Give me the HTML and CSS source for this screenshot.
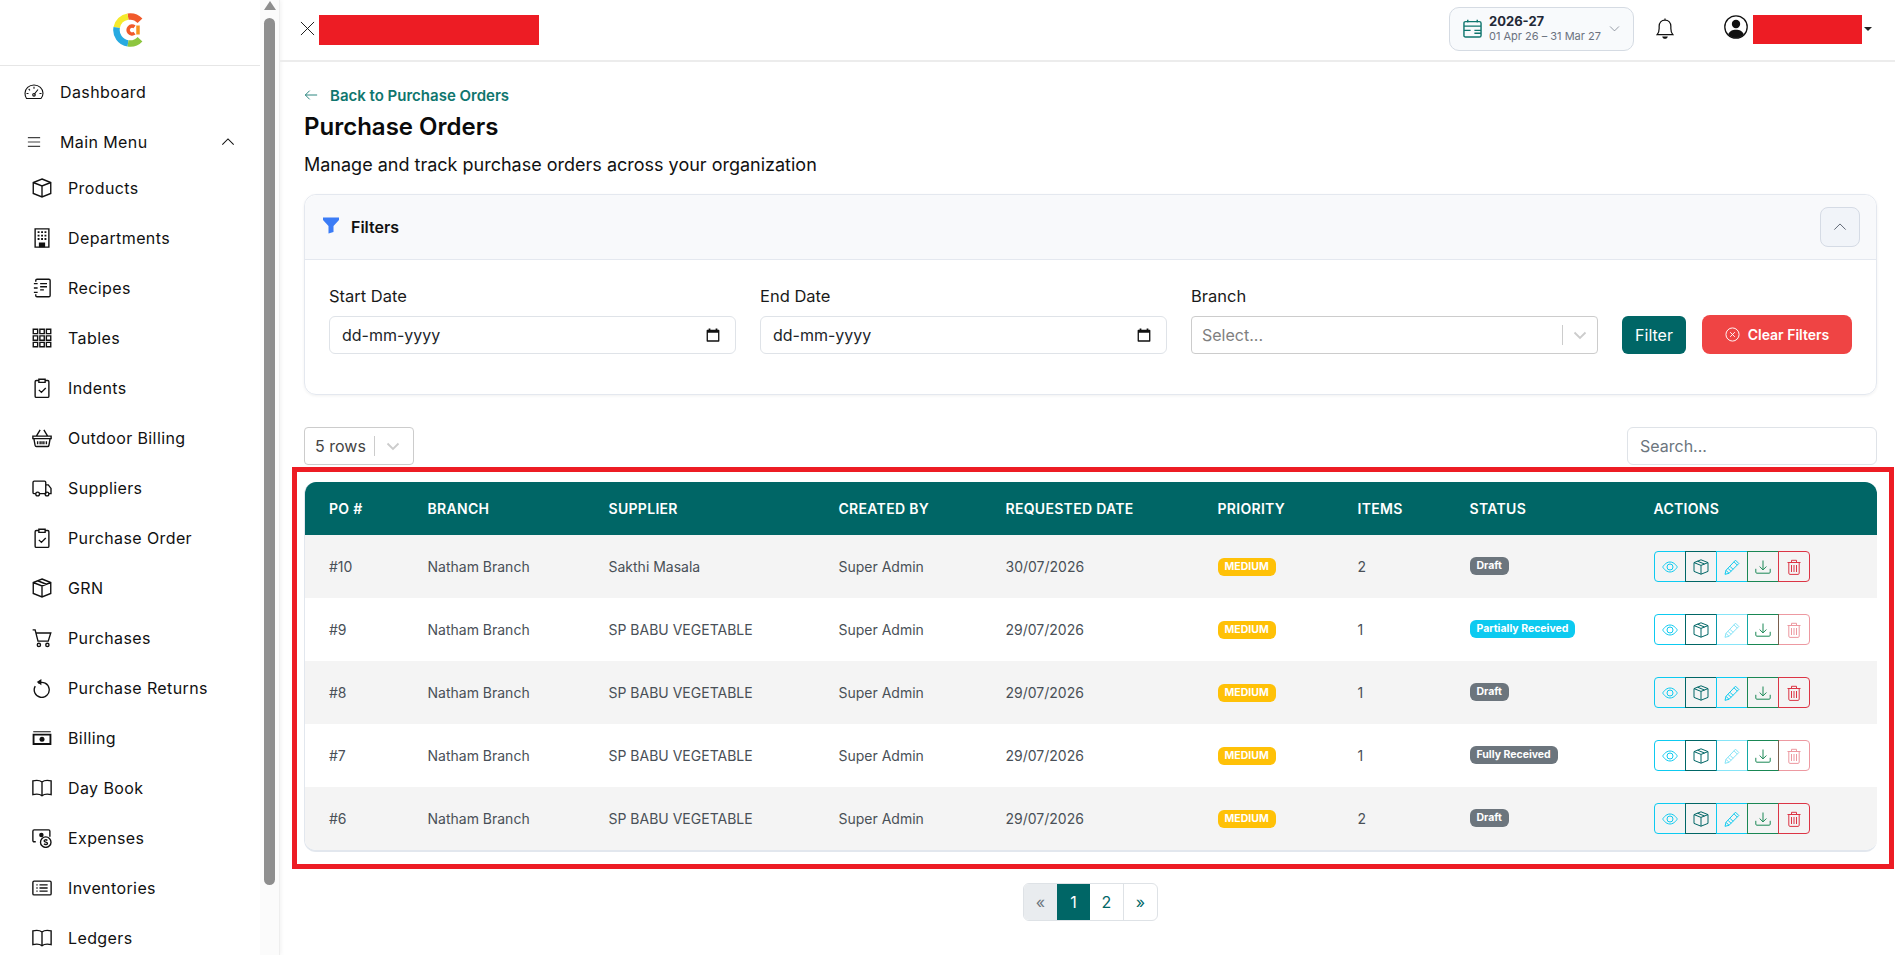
FILE: index.html
```html
<!DOCTYPE html>
<html lang="en">
<head>
    <meta charset="UTF-8">
    <meta name="viewport" content="width=device-width, initial-scale=1.0">
    <title>Purchase Orders</title>
    <link rel="stylesheet" href="styles.css">
</head>
<body>
    <svg class="icon-defs" aria-hidden="true">
        <symbol id="i-box" viewBox="0 0 16 16"><path d="M8 .8l7 2.8v8.800l-7 2.800-7-2.800V3.600zM1 3.600l7 2.800 7-2.800M8 6.400v8.800"/></symbol>
        <symbol id="i-seam" viewBox="0 0 16 16"><path d="M8 .8l7 2.800v8.800l-7 2.800-7-2.800V3.600zM1 3.600l7 2.800 7-2.800M8 6.400v8.800M4.500 2.200l7 2.800"/></symbol>
        <symbol id="i-eye" viewBox="0 0 16 16"><path d="M.7 8S3.400 3 8 3s7.300 5 7.300 5-2.700 5-7.300 5S.7 8 .7 8z"/><circle cx="8" cy="8" r="3"/></symbol>
        <symbol id="i-pencil" viewBox="0 0 16 16"><path d="M11.500 1.200l3.300 3.300L5 14.300l-4 1 1-4zM10 2.800l3.300 3.300M2 11.300l3 3M4 9.300l3 3M6 7.300l3 3"/></symbol>
        <symbol id="i-download" viewBox="0 0 16 16"><path d="M.8 9.800v3.400c0 .6.400 1 1 1h12.400c.6 0 1-.4 1-1V9.800M8 1.500v9.300M4.600 7.500L8 10.900l3.400-3.400"/></symbol>
        <symbol id="i-trash" viewBox="0 0 16 16"><path d="M1.500 3.500h13M5.500 3.500V1.300h5v2.200M2.800 3.500v10.700c0 .7.500 1.200 1.200 1.200h8c.7 0 1.200-.5 1.200-1.200V3.500M5.500 6v7M8 6v7M10.500 6v7"/></symbol>
        <symbol id="i-book" viewBox="0 0 16 16"><path d="M8 3.200C6.500 2 3.500 1.700.7 2.300v11c2.800-.6 5.800-.3 7.300.9 1.500-1.200 4.500-1.500 7.300-.9v-11C12.500 1.700 9.500 2 8 3.200zM8 3.200v11"/></symbol>
        <symbol id="i-clip" viewBox="0 0 16 16"><path d="M5.500 2H3.500c-.6 0-1 .4-1 1v11.500c0 .6.400 1 1 1h9c.6 0 1-.4 1-1V3c0-.6-.4-1-1-1h-2M5.500 1h5v2.500h-5zM5.500 9.500l2 2 3.500-3.500"/></symbol>
        <symbol id="i-chev-up" viewBox="0 0 16 16"><path d="M1.500 11L8 4.500l6.500 6.500"/></symbol>
        <symbol id="i-chev-down" viewBox="0 0 16 16"><path d="M1.500 5L8 11.500 14.500 5"/></symbol>
    </svg>

    <aside class="sidebar">
        <div class="sidebar-nav">
            <div class="logo-row">
                <svg class="logo" viewBox="0 0 34 34">
                    <path d="M15 3.600A13.500 13.500 0 0 1 27 7.800" stroke="#f15a2b"/>
                    <path d="M3.700 14.500A13.500 13.500 0 0 1 15 3.600" stroke="#f5ea2d"/>
                    <path d="M15 30.400A13.500 13.500 0 0 1 3.700 14.500" stroke="#27aae1"/>
                    <path d="M27 26.200A13.500 13.500 0 0 1 15 30.400" stroke="#8dc63f"/>
                    <path class="logo-inner" d="M21.500 13.800a4 4 0 1 0 0 6.400" stroke="#f15a2b"/>
                    <path class="logo-inner" d="M25 12.500v9" stroke="#f7941d"/>
                </svg>
            </div>
            <a class="nav-top">
                <svg class="nav-icon" viewBox="0 0 20 16"><path d="M2.500 14.500H17c1.200-1.500 2-3.200 2-5.200C19 4.600 15 1 10 1S1 4.600 1 9.300c0 2 .4 3.700 1.500 5.200zM10 10.500l4-5M2.500 9.500h2M15.500 9.500h2M4.700 5l1.300 1.300M10 2.800v2"/><circle cx="10" cy="10.800" r="1.300"/></svg>
                <span>Dashboard</span>
            </a>
            <a class="nav-top nav-menu">
                <svg class="nav-icon nav-icon-lines" viewBox="0 0 16 16"><path d="M1 3h14M1 8h14M1 13h14"/></svg>
                <span>Main Menu</span>
                <svg class="nav-caret"><use href="#i-chev-up"/></svg>
            </a>
            <a class="nav-item"><svg class="nav-icon"><use href="#i-box"/></svg><span>Products</span></a>
            <a class="nav-item">
                <svg class="nav-icon" viewBox="0 0 16 16"><path d="M2.500 .7h11v14.600h-11z"/><path class="solid" d="M4.500 2.500h1.500v1.500H4.500zM7.300 2.500h1.500v1.500H7.300zM10 2.500h1.500v1.500H10zM4.500 5.300h1.500v1.500H4.500zM7.300 5.300h1.500v1.500H7.300zM10 5.300h1.500v1.500H10zM4.500 8h1.500v1.500H4.500zM7.300 8h1.500v1.500H7.300zM10 8h1.500v1.500H10zM5.500 11.500h5v3.800h-5z"/></svg>
                <span>Departments</span>
            </a>
            <a class="nav-item">
                <svg class="nav-icon" viewBox="0 0 16 16"><path d="M3 3V2c0-.6.400-1 1-1h9.500c.6 0 1 .4 1 1v12c0 .6-.4 1-1 1H4c-.6 0-1-.4-1-1v-1M1.500 4.500h3M1.500 8h3M1.500 11.500h3M6.500 4.500h5.500M6.500 7h5.500M6.500 9.500h3"/></svg>
                <span>Recipes</span>
            </a>
            <a class="nav-item">
                <svg class="nav-icon" viewBox="0 0 16 16"><path d="M1 1h3.500v3.500H1zM6.300 1h3.500v3.500H6.300zM11.500 1H15v3.500h-3.500zM1 6.300h3.500v3.500H1zM6.300 6.300h3.500v3.500H6.300zM11.500 6.300H15v3.500h-3.500zM1 11.500h3.500V15H1zM6.300 11.500h3.500V15H6.300zM11.500 11.500H15V15h-3.500z"/></svg>
                <span>Tables</span>
            </a>
            <a class="nav-item"><svg class="nav-icon"><use href="#i-clip"/></svg><span>Indents</span></a>
            <a class="nav-item">
                <svg class="nav-icon" viewBox="0 0 16 16"><path d="M.7 6.500h14.600v2H.7zM1.500 8.500l1 5.500c.1.500.5.800 1 .8h9c.5 0 .9-.3 1-.8l1-5.500M3.500 6.500L6.500 1.500M12.500 6.500L9.500 1.500M4.500 10.500v2.500M6.500 10.500v2.500M8 10.500v2.500M9.500 10.500v2.500M11.500 10.500v2.500"/></svg>
                <span>Outdoor Billing</span>
            </a>
            <a class="nav-item">
                <svg class="nav-icon" viewBox="0 0 16 16"><path d="M3 12.500H1.800c-.6 0-1-.4-1-1V3.500c0-.6.400-1 1-1h8.200c.6 0 1 .4 1 1v9H6M11 5.500h2l2.200 2.800v4.200H13.500"/><circle cx="4.500" cy="12.800" r="1.500"/><circle cx="12" cy="12.800" r="1.500"/></svg>
                <span>Suppliers</span>
            </a>
            <a class="nav-item"><svg class="nav-icon"><use href="#i-clip"/></svg><span>Purchase Order</span></a>
            <a class="nav-item"><svg class="nav-icon"><use href="#i-seam"/></svg><span>GRN</span></a>
            <a class="nav-item">
                <svg class="nav-icon" viewBox="0 0 16 16"><path d="M.5 1.500h2l2.300 9h8.200l2-6.500H3.500"/><circle cx="5.500" cy="13.500" r="1.300"/><circle cx="12.300" cy="13.500" r="1.300"/></svg>
                <span>Purchases</span>
            </a>
            <a class="nav-item">
                <svg class="nav-icon" viewBox="0 0 16 16"><path d="M5 4.200A6 6 0 1 1 2.600 6.500"/><path class="solid" d="M7.500 .7v5L3.800 3.200z"/></svg>
                <span>Purchase Returns</span>
            </a>
            <a class="nav-item">
                <svg class="nav-icon" viewBox="0 0 16 16"><path class="solid" fill-rule="evenodd" d="M.5 4.500h15v9H.5zM2 6v6h12V6zM1 2.500h14v.8H1z"/><ellipse class="solid" cx="8" cy="9" rx="2" ry="2"/></svg>
                <span>Billing</span>
            </a>
            <a class="nav-item"><svg class="nav-icon"><use href="#i-book"/></svg><span>Day Book</span></a>
            <a class="nav-item">
                <svg class="nav-icon" viewBox="0 0 16 16"><path d="M3 11H1.700C1.100 11 .7 10.600 .7 10V2.500c0-.6.400-1 1-1h11.600c.6 0 1 .4 1 1V7"/><circle class="solid" cx="7.500" cy="5.500" r="1.800"/><circle cx="11" cy="11.300" r="4.200"/><path d="M12.300 10c-.8-.9-2.600-.7-2.600.4 0 1.200 2.700.7 2.700 1.900 0 1.100-2 1.200-2.800.3"/></svg>
                <span>Expenses</span>
            </a>
            <a class="nav-item">
                <svg class="nav-icon" viewBox="0 0 16 16"><path d="M1.700 2.500h12.600c.6 0 1 .4 1 1v9c0 .6-.4 1-1 1H1.700c-.6 0-1-.4-1-1v-9c0-.6.400-1 1-1zM3.500 5.500h1M3.500 8h1M3.500 10.500h1M6 5.500h6.500M6 8h6.500M6 10.500h6.500"/></svg>
                <span>Inventories</span>
            </a>
            <a class="nav-item"><svg class="nav-icon"><use href="#i-book"/></svg><span>Ledgers</span></a>
        </div>
        <div class="sidebar-scroll">
            <span class="scroll-arrow"></span>
            <span class="scroll-thumb"></span>
        </div>
    </aside>

    <div class="main">
        <header class="topbar">
            <svg class="close-icon" viewBox="0 0 16 16"><path d="M1 1l14 14M15 1L1 15"/></svg>
            <span class="redacted redacted-org"></span>
            <div class="topbar-right">
                <div class="fy-picker">
                    <svg class="fy-icon" viewBox="0 0 20 20"><path d="M1 4.500c0-1 .6-1.700 1.700-1.700h14.600c1.100 0 1.700.7 1.700 1.700v12.800c0 1-.6 1.700-1.700 1.700H2.700c-1.100 0-1.700-.7-1.700-1.700zM1 7.500h18M5 .8v3M15 .8v3M1 12h7M12 12h7M12 15h7"/></svg>
                    <div class="fy-text">
                        <strong>2026-27</strong>
                        <small>01 Apr 26 – 31 Mar 27</small>
                    </div>
                    <svg class="fy-caret"><use href="#i-chev-down"/></svg>
                </div>
                <svg class="bell" viewBox="0 0 16 20"><path d="M1 15.500c1.300-1.300 1.800-3 1.800-5.500V8c0-3 2-5.500 5.200-5.500S13.200 5 13.200 8v2c0 2.500.5 4.200 1.800 5.500zM8 2.500V1"/><path class="solid" d="M5.500 17h5c-.3 1.300-1.300 2.200-2.500 2.200S5.800 18.300 5.500 17z"/></svg>
                <svg class="user-icon" viewBox="0 0 24 24"><circle cx="12" cy="12" r="11.200"/><circle class="solid" cx="12" cy="9" r="4.200"/><path class="solid" d="M4.200 19.500C5.500 16 8.500 14.700 12 14.700s6.500 1.300 7.800 4.800A11 11 0 0 1 12 23a11 11 0 0 1-7.800-3.500z"/></svg>
                <span class="redacted redacted-user"></span>
                <span class="user-caret"></span>
            </div>
        </header>

        <main class="content">
            <a class="back-link">
                <svg viewBox="0 0 16 16"><path d="M15 8H1.500M6.500 3l-5 5 5 5"/></svg>
                <span>Back to Purchase Orders</span>
            </a>
            <h1>Purchase Orders</h1>
            <p class="subtitle">Manage and track purchase orders across your organization</p>

            <section class="filter-card">
                <div class="filter-head">
                    <svg class="funnel" viewBox="0 0 16 16"><path d="M0 0h16v2.500L10.500 8.500V14.500L5.500 16V8.500L0 2.500z"/></svg>
                    <span class="filter-title">Filters</span>
                    <button class="collapse-btn"><svg><use href="#i-chev-up"/></svg></button>
                </div>
                <div class="filter-body">
                    <div class="field">
                        <label>Start Date</label>
                        <div class="date-input">
                            <span>dd-mm-yyyy</span>
                            <svg viewBox="0 0 16 16"><path class="solid" fill-rule="evenodd" d="M3 .5h2v1.500h6V.5h2v1.500h1.500c.5 0 .8.300.8.800v12c0 .5-.3.800-.8.800h-13c-.5 0-.8-.3-.8-.8v-12c0-.5.300-.8.800-.8H3zM2.200 5.500v8.500h11.600V5.500z"/></svg>
                        </div>
                    </div>
                    <div class="field">
                        <label>End Date</label>
                        <div class="date-input">
                            <span>dd-mm-yyyy</span>
                            <svg viewBox="0 0 16 16"><path class="solid" fill-rule="evenodd" d="M3 .5h2v1.500h6V.5h2v1.500h1.500c.5 0 .8.300.8.800v12c0 .5-.3.800-.8.800h-13c-.5 0-.8-.3-.8-.8v-12c0-.5.300-.8.800-.8H3zM2.200 5.500v8.500h11.600V5.500z"/></svg>
                        </div>
                    </div>
                    <div class="field">
                        <label>Branch</label>
                        <div class="select-box">
                            <span class="select-value">Select...</span>
                            <span class="select-sep"></span>
                            <svg class="select-caret" viewBox="0 0 20 20"><path d="M4.500 7.500L10 13l5.500-5.500"/></svg>
                        </div>
                    </div>
                    <div class="filter-actions">
                        <button class="btn-filter">Filter</button>
                        <button class="btn-clear">
                            <svg viewBox="0 0 16 16"><circle cx="8" cy="8" r="7"/><path d="M5.500 5.500l5 5M10.500 5.500l-5 5"/></svg>
                            Clear Filters
                        </button>
                    </div>
                </div>
            </section>

            <div class="toolbar">
                <div class="rows-select">
                    <span class="select-value">5 rows</span>
                    <span class="select-sep"></span>
                    <svg class="select-caret" viewBox="0 0 20 20"><path d="M4.500 7.500L10 13l5.500-5.500"/></svg>
                </div>
                <div class="search-box">Search...</div>
            </div>

            <div class="table-wrap">
                <table class="orders">
                    <thead>
                        <tr>
                            <th>PO #</th><th>Branch</th><th>Supplier</th><th>Created By</th><th>Requested Date</th><th>Priority</th><th>Items</th><th>Status</th><th>Actions</th>
                        </tr>
                    </thead>
                    <tbody>
                        <tr>
                            <td>#10</td><td>Natham Branch</td><td>Sakthi Masala</td><td>Super Admin</td><td>30/07/2026</td>
                            <td><span class="badge badge-medium">MEDIUM</span></td><td>2</td>
                            <td><span class="badge badge-status badge-gray">Draft</span></td>
                            <td>
                                <div class="actions">
                                    <button class="act act-info"><svg><use href="#i-eye"/></svg></button>
                                    <button class="act act-teal"><svg><use href="#i-seam"/></svg></button>
                                    <button class="act act-info"><svg><use href="#i-pencil"/></svg></button>
                                    <button class="act act-green"><svg><use href="#i-download"/></svg></button>
                                    <button class="act act-red"><svg><use href="#i-trash"/></svg></button>
                                </div>
                            </td>
                        </tr>
                        <tr>
                            <td>#9</td><td>Natham Branch</td><td>SP BABU VEGETABLE</td><td>Super Admin</td><td>29/07/2026</td>
                            <td><span class="badge badge-medium">MEDIUM</span></td><td>1</td>
                            <td><span class="badge badge-status badge-cyan">Partially Received</span></td>
                            <td>
                                <div class="actions">
                                    <button class="act act-info"><svg><use href="#i-eye"/></svg></button>
                                    <button class="act act-teal"><svg><use href="#i-seam"/></svg></button>
                                    <button class="act act-info is-disabled"><svg><use href="#i-pencil"/></svg></button>
                                    <button class="act act-green"><svg><use href="#i-download"/></svg></button>
                                    <button class="act act-red is-disabled"><svg><use href="#i-trash"/></svg></button>
                                </div>
                            </td>
                        </tr>
                        <tr>
                            <td>#8</td><td>Natham Branch</td><td>SP BABU VEGETABLE</td><td>Super Admin</td><td>29/07/2026</td>
                            <td><span class="badge badge-medium">MEDIUM</span></td><td>1</td>
                            <td><span class="badge badge-status badge-gray">Draft</span></td>
                            <td>
                                <div class="actions">
                                    <button class="act act-info"><svg><use href="#i-eye"/></svg></button>
                                    <button class="act act-teal"><svg><use href="#i-seam"/></svg></button>
                                    <button class="act act-info"><svg><use href="#i-pencil"/></svg></button>
                                    <button class="act act-green"><svg><use href="#i-download"/></svg></button>
                                    <button class="act act-red"><svg><use href="#i-trash"/></svg></button>
                                </div>
                            </td>
                        </tr>
                        <tr>
                            <td>#7</td><td>Natham Branch</td><td>SP BABU VEGETABLE</td><td>Super Admin</td><td>29/07/2026</td>
                            <td><span class="badge badge-medium">MEDIUM</span></td><td>1</td>
                            <td><span class="badge badge-status badge-gray">Fully Received</span></td>
                            <td>
                                <div class="actions">
                                    <button class="act act-info"><svg><use href="#i-eye"/></svg></button>
                                    <button class="act act-teal"><svg><use href="#i-seam"/></svg></button>
                                    <button class="act act-info is-disabled"><svg><use href="#i-pencil"/></svg></button>
                                    <button class="act act-green"><svg><use href="#i-download"/></svg></button>
                                    <button class="act act-red is-disabled"><svg><use href="#i-trash"/></svg></button>
                                </div>
                            </td>
                        </tr>
                        <tr>
                            <td>#6</td><td>Natham Branch</td><td>SP BABU VEGETABLE</td><td>Super Admin</td><td>29/07/2026</td>
                            <td><span class="badge badge-medium">MEDIUM</span></td><td>2</td>
                            <td><span class="badge badge-status badge-gray">Draft</span></td>
                            <td>
                                <div class="actions">
                                    <button class="act act-info"><svg><use href="#i-eye"/></svg></button>
                                    <button class="act act-teal"><svg><use href="#i-seam"/></svg></button>
                                    <button class="act act-info"><svg><use href="#i-pencil"/></svg></button>
                                    <button class="act act-green"><svg><use href="#i-download"/></svg></button>
                                    <button class="act act-red"><svg><use href="#i-trash"/></svg></button>
                                </div>
                            </td>
                        </tr>
                    </tbody>
                </table>
            </div>

            <nav class="pagination">
                <a class="page page-off">«</a>
                <a class="page page-on">1</a>
                <a class="page">2</a>
                <a class="page">»</a>
            </nav>
        </main>
    </div>

    <div class="highlight-box"></div>
</body>
</html>
```

FILE: styles.css
```css
* {
    box-sizing: border-box;
}
html, body {
    height: 100%;
}
body {
    margin: 0;
    display: flex;
    height: 955px;
    overflow: hidden;
    background-color: #fff;
    font-family: Inter, "Liberation Sans", sans-serif;
    color: #111;
}
button {
    font-family: inherit;
    cursor: pointer;
}
svg {
    fill: none;
    stroke: currentColor;
    stroke-width: 1;
}
svg .solid {
    fill: currentColor;
    stroke: none;
}
.icon-defs {
    display: none;
}

/* sidebar */
.sidebar {
    flex: 0 0 280px;
    display: flex;
    height: 955px;
    overflow: hidden;
    border-right: 1px solid #eee;
    box-shadow: 1px 0 4px rgba(0,0,0,0.06);
}
.sidebar-nav {
    width: 260px;
    flex: none;
    font-family: Inter, sans-serif;
    font-size: 16px;
    letter-spacing: 0.4px;
}
.sidebar-scroll {
    flex: 1;
    display: flex;
    flex-direction: column;
    align-items: center;
    background-color: #fbfbfb;
}
.scroll-arrow {
    margin-top: 1px;
    border: 6px solid transparent;
    border-top: 0;
    border-bottom: 9px solid #8e8e8e;
}
.scroll-thumb {
    width: 11px;
    height: 867px;
    margin-top: 8px;
    border-radius: 6px;
    background-color: #8e8e8e;
}
.logo-row {
    height: 66px;
    display: flex;
    align-items: center;
    justify-content: center;
    margin-bottom: 1px;
    padding-bottom: 5px;
    border-bottom: 1px solid #e6e6e6;
}
.logo {
    width: 34px;
    height: 34px;
    stroke-width: 6.5;
}
.logo .logo-inner {
    stroke-width: 3.5;
}
.nav-top, .nav-item {
    display: flex;
    align-items: center;
    height: 50px;
    color: #111;
}
.nav-top {
    padding-left: 24px;
}
.nav-top span {
    margin-left: 16px;
}
.nav-item {
    padding-left: 32px;
}
.nav-item span {
    margin-left: 16px;
}
.nav-icon {
    width: 20px;
    height: 20px;
    flex: none;
    stroke-width: 1.1;
}
.nav-icon-lines {
    width: 14px;
    height: 14px;
    margin: 0 3px;
    color: #444;
    stroke-width: 1.3;
}
.nav-caret {
    width: 14px;
    height: 14px;
    margin-left: auto;
    margin-right: 25px;
    stroke-width: 1.2;
}
.nav-menu {
    margin-bottom: -4px;
}

/* top bar */
.main {
    flex: 1;
    min-width: 0;
    display: flex;
    flex-direction: column;
}
.topbar {
    height: 62px;
    flex: none;
    display: flex;
    align-items: center;
    padding-left: 20px;
    border-bottom: 2px solid #ececec;
}
.close-icon {
    width: 15px;
    height: 15px;
    margin-top: -3px;
}
.redacted {
    display: block;
    background-color: #ed1c24;
}
.redacted-org {
    width: 220px;
    height: 30px;
    margin-left: 4px;
    margin-top: -1px;
}
.topbar-right {
    display: flex;
    align-items: center;
    margin-left: auto;
    margin-top: -3px;
}
.fy-picker {
    width: 185px;
    height: 44px;
    display: flex;
    align-items: center;
    padding-left: 13px;
    border: 1px solid #d5dbe3;
    border-radius: 10px;
    background-color: #f8fafc;
}
.fy-icon {
    width: 19px;
    height: 19px;
    color: #0f766e;
    stroke-width: 1.5;
}
.fy-text {
    display: flex;
    flex-direction: column;
    margin-left: 7px;
}
.fy-text strong {
    font-size: 13px;
    line-height: 15px;
    font-weight: 700;
    color: #1f2937;
}
.fy-text small {
    font-size: 11px;
    line-height: 14px;
    color: #6b7280;
}
.fy-caret {
    width: 11px;
    height: 11px;
    margin-left: auto;
    margin-right: 13px;
    color: #6b7280;
}
.bell {
    width: 18px;
    height: 23px;
    margin-left: 22px;
    stroke-width: 1.1;
}
.user-icon {
    width: 24px;
    height: 24px;
    margin-left: 50px;
    margin-top: -3px;
    stroke-width: 1.3;
}
.redacted-user {
    width: 109px;
    height: 29px;
    margin-left: 5px;
    margin-top: 1px;
}
.user-caret {
    margin-left: 2px;
    margin-right: 23px;
    border: 4px solid transparent;
    border-top: 4px solid #222;
    border-bottom: 0;
}

/* page */
.content {
    flex: 1;
    padding: 24px 18px 0 24px;
}
.back-link {
    display: flex;
    align-items: center;
    height: 18px;
    color: #0f766e;
    font-size: 15px;
    font-weight: 600;
}
.back-link svg {
    width: 14px;
    height: 14px;
    margin-right: 12px;
    flex: none;
}
h1 {
    margin: 7px 0 0;
    font-size: 24px;
    line-height: 32px;
    font-weight: 600;
    color: #0b0b0b;
}
.subtitle {
    margin: 10px 0 0;
    font-size: 18px;
    line-height: 24px;
    color: #111;
}

/* filters */
.filter-card {
    height: 201px;
    margin-top: 17px;
    border: 1px solid #e4e8ef;
    border-radius: 12px;
    box-shadow: 0 1px 3px rgba(0,0,0,0.06);
}
.filter-head {
    height: 65px;
    display: flex;
    align-items: center;
    padding: 0 16px 0 18px;
    border-bottom: 1px solid #e4e8ef;
    border-radius: 12px 12px 0 0;
    background-color: #f8f9fb;
}
.funnel {
    width: 16px;
    height: 17px;
    fill: #3b7cf6;
    stroke: none;
    margin-top: -3px;
}
.filter-title {
    margin-left: 12px;
    font-size: 16px;
    font-weight: 600;
}
.collapse-btn {
    width: 40px;
    height: 40px;
    margin-left: auto;
    padding: 0;
    display: flex;
    align-items: center;
    justify-content: center;
    border: 1px solid #d5dbe5;
    border-radius: 8px;
    background-color: #f1f4f9;
    color: #4b5563;
}
.collapse-btn svg {
    width: 14px;
    height: 14px;
}
.filter-body {
    display: flex;
    align-items: flex-end;
    gap: 24px;
    padding: 26px 24px 0;
}
.field {
    flex: 1;
    min-width: 0;
}
.field label {
    display: block;
    margin-bottom: 9px;
    font-size: 16.5px;
    line-height: 21px;
    color: #1a1a1a;
}
.date-input {
    height: 38px;
    display: flex;
    align-items: center;
    justify-content: space-between;
    padding: 0 15px 0 12px;
    border: 1px solid #dfe3e8;
    border-radius: 6px;
    font-size: 16px;
    color: #212529;
}
.date-input svg {
    width: 14px;
    height: 14px;
    color: #111;
}
.select-box {
    height: 38px;
    display: flex;
    align-items: center;
    padding-left: 10px;
    border: 1px solid #ccc;
    border-radius: 4px;
}
.select-value {
    font-size: 16px;
    color: #808080;
}
.select-box .select-value {
    flex: 1;
}
.select-sep {
    width: 1px;
    height: 20px;
    background-color: #ccc;
}
.select-caret {
    width: 20px;
    height: 20px;
    margin: 0 7px;
    color: #ccc;
    stroke-width: 1.8;
}
.filter-actions {
    display: flex;
    align-items: flex-end;
    gap: 16px;
}
.btn-filter {
    width: 64px;
    height: 38px;
    padding: 0;
    border: 0;
    border-radius: 6px;
    background-color: #006666;
    color: #fff;
    font-size: 16px;
}
.btn-clear {
    width: 150px;
    height: 39px;
    padding: 0;
    display: flex;
    align-items: center;
    justify-content: center;
    gap: 8px;
    border: 0;
    border-radius: 8px;
    background-color: #ef4444;
    color: #fff;
    font-size: 14px;
    font-weight: 600;
}
.btn-clear svg {
    width: 15px;
    height: 15px;
}

/* table */
.toolbar {
    display: flex;
    justify-content: space-between;
    margin-top: 32px;
}
.rows-select {
    width: 110px;
    height: 38px;
    display: flex;
    align-items: center;
    padding-left: 10px;
    border: 1px solid #ccc;
    border-radius: 4px;
}
.rows-select .select-value {
    color: #444;
    margin-right: 8px;
}
.rows-select .select-caret {
    margin: 0 8px;
}
.search-box {
    width: 250px;
    height: 38px;
    display: flex;
    align-items: center;
    padding-left: 12px;
    border: 1px solid #dfe3e8;
    border-radius: 6px;
    font-size: 16px;
    color: #6c757d;
}
.table-wrap {
    margin-top: 17px;
    border-bottom: 2px solid #e2e7ee;
    border-left: 1px solid #e2e7ee;
    border-radius: 12px;
    overflow: hidden;
}
.orders {
    width: 100%;
    table-layout: fixed;
    border-collapse: collapse;
    font-size: 14px;
    color: #495057;
}
.orders th {
    height: 53px;
    padding: 0 0 0 24px;
    background-color: #006666;
    color: #fff;
    font-size: 14px;
    font-weight: 600;
    text-align: left;
    text-transform: uppercase;
    letter-spacing: 0.3px;
}
.orders td {
    height: 63px;
    padding: 0 0 0 24px;
}
.orders tbody tr:nth-child(odd) {
    background-color: #f4f4f4;
}
.orders th:nth-child(1) { width: 98.5px; }
.orders th:nth-child(2) { width: 181px; }
.orders th:nth-child(3) { width: 230px; }
.orders th:nth-child(4) { width: 167px; }
.orders th:nth-child(5) { width: 212px; }
.orders th:nth-child(6) { width: 140px; }
.orders th:nth-child(7) { width: 112px; }
.orders th:nth-child(8) { width: 184px; }
.badge {
    display: inline-block;
    height: 18px;
    padding: 0 7px;
    border-radius: 6px;
    color: #fff;
    font-size: 10.5px;
    font-weight: 700;
    line-height: 18px;
    vertical-align: middle;
}
.badge-status {
    position: relative;
    top: -1px;
}
.badge-medium {
    background-color: #ffc107;
}
.badge-gray {
    background-color: #6c757d;
}
.badge-cyan {
    background-color: #0dcaf0;
}
.actions {
    display: flex;
}
.act {
    width: 32px;
    height: 31px;
    margin-left: -1px;
    padding: 0;
    display: flex;
    align-items: center;
    justify-content: center;
    border: 1px solid currentColor;
    background: transparent;
}
.act:first-child {
    margin-left: 0;
    border-radius: 4px 0 0 4px;
}
.act:last-child {
    border-radius: 0 4px 4px 0;
}
.act svg {
    width: 16px;
    height: 16px;
}
.act-info { color: #0dcaf0; }
.act-teal { color: #006666; }
.act-green { color: #198754; }
.act-red { color: #dc3545; }
.is-disabled {
    opacity: 0.5;
}

/* pagination */
.pagination {
    display: flex;
    justify-content: center;
    width: 135px;
    height: 38px;
    margin: 31px 0 0 719px;
    border: 1px solid #dee2e6;
    border-radius: 6px;
    overflow: hidden;
}
.page {
    flex: 1;
    display: flex;
    align-items: center;
    justify-content: center;
    border-left: 1px solid #dee2e6;
    color: #006666;
    font-size: 16px;
}
.page:first-child {
    border-left: 0;
}
.page-off {
    background-color: #e9ecef;
    color: #6c757d;
}
.page-on {
    border-left: 0;
    background-color: #006666;
    color: #fff;
}
.page-on + .page {
    border-left: 0;
}

/* red marker drawn over the table */
.highlight-box {
    position: absolute;
    left: 292px;
    top: 467px;
    width: 1602px;
    height: 402px;
    border: 5px solid #ed1c24;
    pointer-events: none;
}
```
